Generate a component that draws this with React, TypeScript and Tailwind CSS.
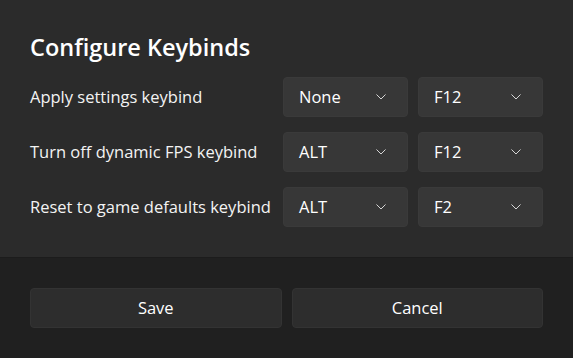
const ROWS = [
  { label: "Apply settings keybind", mod: "None", key: "F12" },
  { label: "Turn off dynamic FPS keybind", mod: "ALT", key: "F12" },
  { label: "Reset to game defaults keybind", mod: "ALT", key: "F2" },
];

function Chevron() {
  return (
    <svg width="10" height="6" viewBox="0 0 10 6" fill="none" className="shrink-0">
      <path d="M0.75 0.75 L5 5 L9.25 0.75" stroke="#d6d6d6" strokeWidth="1" strokeLinecap="round" strokeLinejoin="round" />
    </svg>
  );
}

function Select({ value }: { value: string }) {
  return (
    <div className="flex h-[40px] w-[125px] items-center justify-between rounded-[4px] border border-[#3a3a3a] bg-[#373737] pl-[15px] pr-[21px]">
      <span className="text-[16.5px] text-white">{value}</span>
      <Chevron />
    </div>
  );
}

export default function App() {
  return (
    <div
      className="flex h-[358px] w-[573px] flex-col bg-[#202020] text-white"
      style={{ fontFamily: '"Segoe UI", "Open Sans", "Noto Sans", sans-serif' }}
    >
      {/* Content */}
      <div className="flex flex-col border-b border-[#1c1c1c] bg-[#2b2b2b] px-[30px] pb-[30px] pt-[30px]">
        <h1 className="text-[23.5px] font-semibold leading-[34px]">Configure Keybinds</h1>
        <div className="mt-[13px] flex flex-col gap-[15px]">
          {ROWS.map((row) => (
            <div key={row.label} className="flex items-center">
              <span className="flex-1 text-[16.5px] text-[#f3f3f3]">{row.label}</span>
              <div className="flex gap-[10px]">
                <Select value={row.mod} />
                <Select value={row.key} />
              </div>
            </div>
          ))}
        </div>
      </div>

      {/* Footer */}
      <div className="flex flex-1 items-center gap-[10px] px-[30px]">
        <button className="flex h-[40px] flex-1 items-center justify-center rounded-[4px] border border-[#333333] bg-[#2d2d2d] text-[16.5px] text-white">
          Save
        </button>
        <button className="flex h-[40px] flex-1 items-center justify-center rounded-[4px] border border-[#333333] bg-[#2d2d2d] text-[16.5px] text-white">
          Cancel
        </button>
      </div>
    </div>
  );
}
